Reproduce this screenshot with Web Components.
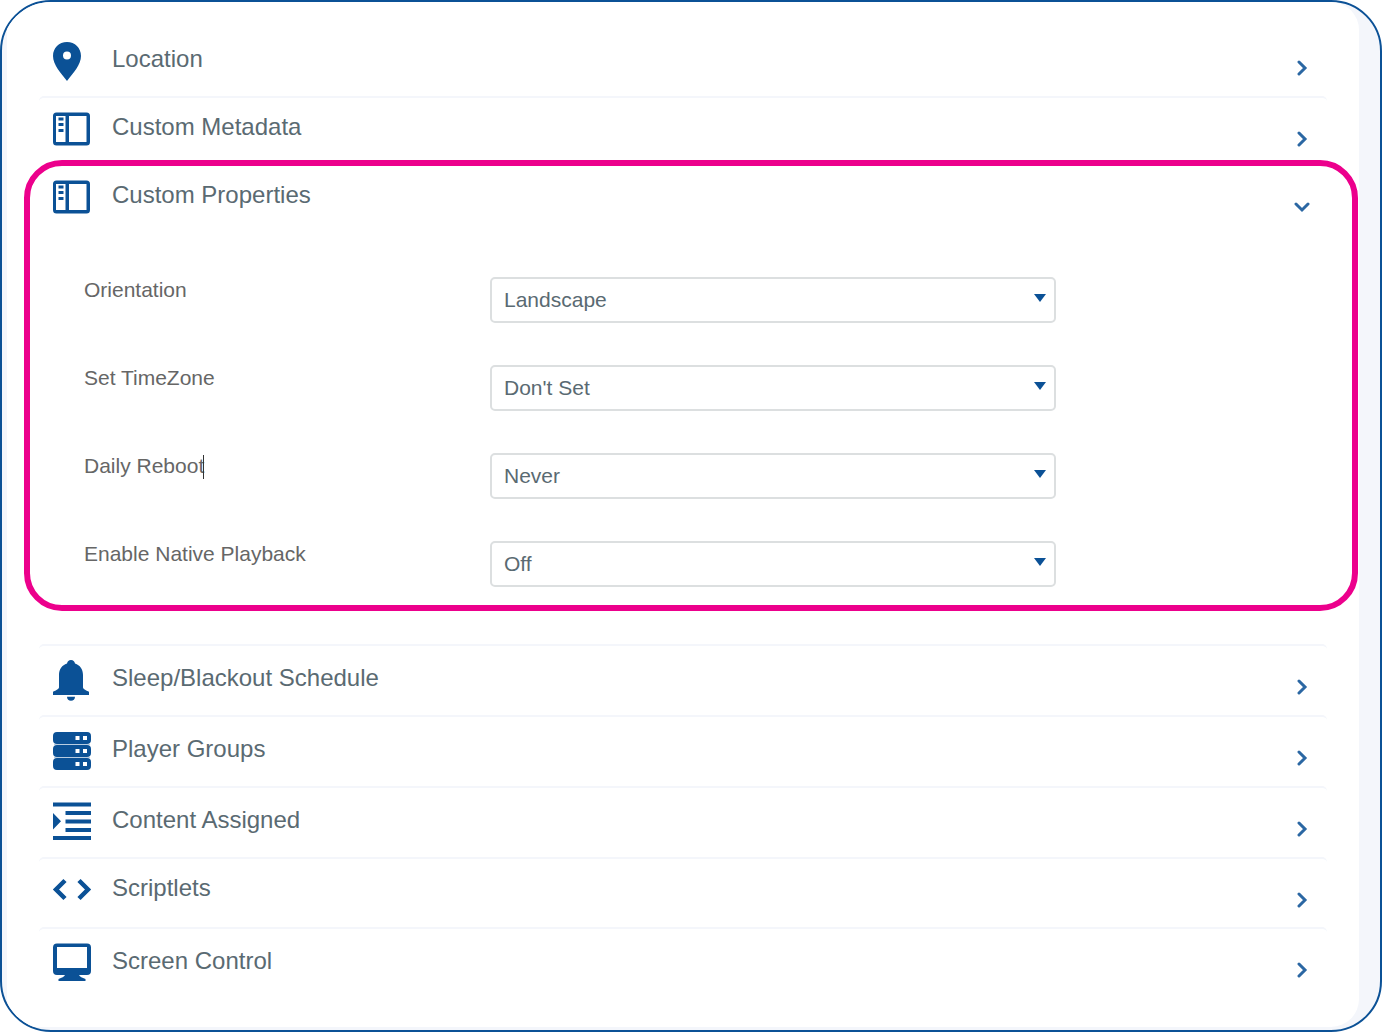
<!DOCTYPE html>
<html lang="en">
<head>
<meta charset="utf-8">
<title>Player settings</title>
<style>
  body {
    margin: 0;
    background: #fff;
    font-family: "Liberation Sans", Arial, sans-serif;
    --blue: #0b5196;
    --text: #5a6a72;
    --line: #f4f6fb;
  }
</style>
</head>
<body>
<settings-panel>
  <settings-section icon="pin" label="Location" first></settings-section>
  <settings-section icon="layout" label="Custom Metadata"></settings-section>
  <settings-section icon="layout" label="Custom Properties" open highlight>
    <settings-field label="Orientation" options="Landscape,Portrait"></settings-field>
    <settings-field label="Set TimeZone" options="Don't Set,Set"></settings-field>
    <settings-field label="Daily Reboot" options="Never,Daily" caret></settings-field>
    <settings-field label="Enable Native Playback" options="Off,On"></settings-field>
  </settings-section>
  <settings-section icon="bell" label="Sleep/Blackout Schedule"></settings-section>
  <settings-section icon="servers" label="Player Groups"></settings-section>
  <settings-section icon="indent" label="Content Assigned"></settings-section>
  <settings-section icon="code" label="Scriptlets"></settings-section>
  <settings-section icon="monitor" label="Screen Control"></settings-section>
</settings-panel>

<script>
// height is the icon box, the label is centered on it
const ICONS = {
  pin: {
    height: 40,
    body: '<path fill-rule="evenodd" d="M14 1C6 1 0 7 0 15c0 9 8 17 14 25 6-8 14-16 14-25C28 7 22 1 14 1zm0 9.500a4 4 0 1 1 0 8 4 4 0 0 1 0-8z"/>'
  },
  layout: {
    height: 34,
    body: `<path fill-rule="evenodd" d="M3.500 0.500h30a3.500 3.500 0 0 1 3.500 3.500v26a3.500 3.500 0 0 1-3.500 3.500h-30A3.500 3.500 0 0 1 0 30V4A3.500 3.500 0 0 1 3.500 0.500zM3 4v26h9.500V4zM16 4v26h17.500V4z"/>
      <path d="M5.500 5.500h5v3h-5zM5.500 11h5v3h-5zM5.500 17h5v3h-5z"/>`
  },
  bell: {
    height: 40,
    body: '<path d="M18 0c-2.300 0-3.500 1.300-4 3.500C9 5 6 9.500 6 15v12c0 1.800-1.500 2.800-6 4.800V35h36v-3.200c-4.500-2-6-3-6-4.800V15c0-5.500-3-10-8-11.500C21.500 1.300 20.300 0 18 0zM14 36.800h8c0 2.600-1.700 4-4 4s-4-1.400-4-4z"/>'
  },
  servers: {
    height: 40,
    body: [1, 14, 27].map(y => `<path fill-rule="evenodd" d="M4 ${y}h30a4 4 0 0 1 4 4v4a4 4 0 0 1-4 4H4a4 4 0 0 1-4-4v-4a4 4 0 0 1 4-4zm18.500 4v4h4v-4zm7.500 0v4h4v-4z"/>`).join('')
      + '<path stroke="#b9cde1" d="M1 13.500h36M1 26.500h36"/>'
  },
  indent: {
    height: 40,
    body: '<path d="M0 0.500h38v4H0zM12.500 9H38v4H12.500zM12.500 17.500H38v4H12.500zM12.500 26H38v4H12.500zM0 34h38v4H0zM0 11l8 8.300L0 27.500z"/>'
  },
  code: {
    height: 34,
    body: '<path fill="none" stroke="currentColor" stroke-width="4.500" d="M12 7.500L3 16.500l9 9M26 7.500l9 9-9 9"/>'
  },
  monitor: {
    height: 40,
    body: '<path fill-rule="evenodd" d="M4 0.500h30a4 4 0 0 1 4 4V28a4 4 0 0 1-4 4h-8c1 1.800 3 2.800 6.500 4v2h-27v-2c3.500-1.200 5.500-2.200 6.500-4H4a4 4 0 0 1-4-4V4.500a4 4 0 0 1 4-4zm0 3.500v21h30V4z"/>'
  }
};

class SettingsPanel extends HTMLElement {
  constructor() {
    super();
    this.attachShadow({ mode: 'open' });
  }

  connectedCallback() {
    this.shadowRoot.innerHTML = `
      <style>
        :host {
          display: flex;
          box-sizing: border-box;
          min-height: 100vh;
          border: 2px solid var(--blue);
          border-radius: 51px;
          background: #f4f6fb;
          overflow: hidden;
        }
        main {
          flex: 1;
          min-width: 0;
          box-sizing: border-box;
          margin: 0 21px 3px 5px;
          padding: 25px 32px;
          background: #fff;
          border-radius: 28px;
        }
      </style>
      <main><slot></slot></main>
    `;
  }
}

class SettingsSection extends HTMLElement {
  static get observedAttributes() {
    return ['open'];
  }

  constructor() {
    super();
    this.attachShadow({ mode: 'open' });
  }

  connectedCallback() {
    this.render();
  }

  attributeChangedCallback() {
    const button = this.shadowRoot.querySelector('button');
    if (button) button.setAttribute('aria-expanded', this.hasAttribute('open'));
  }

  render() {
    const icon = ICONS[this.getAttribute('icon')];

    this.shadowRoot.innerHTML = `
      <style>
        :host {
          display: block;
          position: relative;
          border-top: 2px solid var(--line);
          border-radius: 5px;
        }
        :host([first]), :host([highlight]) {
          border-top: 0;
        }
        button {
          display: flex;
          align-items: flex-start;
          box-sizing: border-box;
          width: 100%;
          min-height: 68px;
          margin: 0;
          padding: 14px 17px 15px 14px;
          border: 0;
          background: none;
          color: var(--blue);
          font: inherit;
          text-align: left;
          cursor: pointer;
        }
        .title {
          flex: 1;
          display: flex;
          align-items: center;
          gap: 21px;
        }
        .icon {
          flex: none;
          fill: currentColor;
          overflow: visible;
        }
        .label {
          padding-bottom: 4px;
          color: var(--text);
          font-size: 24px;
          line-height: 28px;
        }
        .chevron {
          flex: none;
          margin-top: 19px;
          fill: none;
          stroke: #2b67a3;
          stroke-width: 3;
          stroke-linecap: round;
        }
        :host([open]) .chevron {
          transform: rotate(90deg);
        }
        .body {
          display: none;
          flex-direction: column;
          gap: 42px;
          padding: 43px 0 57px 45px;
        }
        :host([open]) .body {
          display: flex;
        }
        :host([open]:empty) .body {
          display: none;
        }
        /* the ring runs outside the section, over its neighbours */
        :host([highlight][open])::after {
          content: "";
          position: absolute;
          z-index: 1;
          inset: -6px -31px 33px -15px;
          border: 6px solid #ec008c;
          border-radius: 38px;
          pointer-events: none;
        }
      </style>
      <button type="button" aria-expanded="${this.hasAttribute('open')}">
        <span class="title">
          <svg class="icon" width="38" height="${icon.height}" viewBox="0 0 38 ${icon.height}" aria-hidden="true">${icon.body}</svg>
          <span class="label">${this.getAttribute('label')}</span>
        </span>
        <svg class="chevron" width="16" height="16" viewBox="0 0 16 16" aria-hidden="true"><path d="M5 2l6 6-6 6"/></svg>
      </button>
      <div class="body"><slot></slot></div>
    `;

    this.shadowRoot.querySelector('button').addEventListener('click', () => {
      this.toggleAttribute('open');
    });
  }
}

class SettingsField extends HTMLElement {
  constructor() {
    super();
    this.attachShadow({ mode: 'open' });
  }

  connectedCallback() {
    const options = this.getAttribute('options').split(',');

    this.shadowRoot.innerHTML = `
      <style>
        :host {
          display: grid;
          grid-template-columns: 406fr 566fr 271fr;
          align-items: start;
          font-size: 21px;
        }
        label {
          color: #666;
          line-height: 26px;
        }
        .caret {
          display: inline-block;
          width: 1px;
          height: 24px;
          margin-left: -1px;
          background: #333;
          vertical-align: middle;
        }
        .control {
          display: grid;
          align-items: center;
        }
        select, svg {
          grid-area: 1 / 1;
        }
        select {
          appearance: none;
          box-sizing: border-box;
          width: 100%;
          height: 46px;
          margin: 0;
          padding: 0 36px 2px 12px;
          border: 2px solid #dcdfe0;
          border-radius: 5px;
          background: #fff;
          color: var(--text);
          font: inherit;
        }
        svg {
          justify-self: end;
          margin: 0 10px 4px 0;
          fill: var(--blue);
          pointer-events: none;
        }
      </style>
      <label for="value">${this.getAttribute('label')}${this.hasAttribute('caret') ? '<span class="caret"></span>' : ''}</label>
      <div class="control">
        <select id="value">${options.map(o => `<option>${o}</option>`).join('')}</select>
        <svg width="12" height="8" viewBox="0 0 12 8" aria-hidden="true"><path d="M0 0h12L6 8z"/></svg>
      </div>
    `;
  }
}

customElements.define('settings-panel', SettingsPanel);
customElements.define('settings-section', SettingsSection);
customElements.define('settings-field', SettingsField);
</script>
</body>
</html>
